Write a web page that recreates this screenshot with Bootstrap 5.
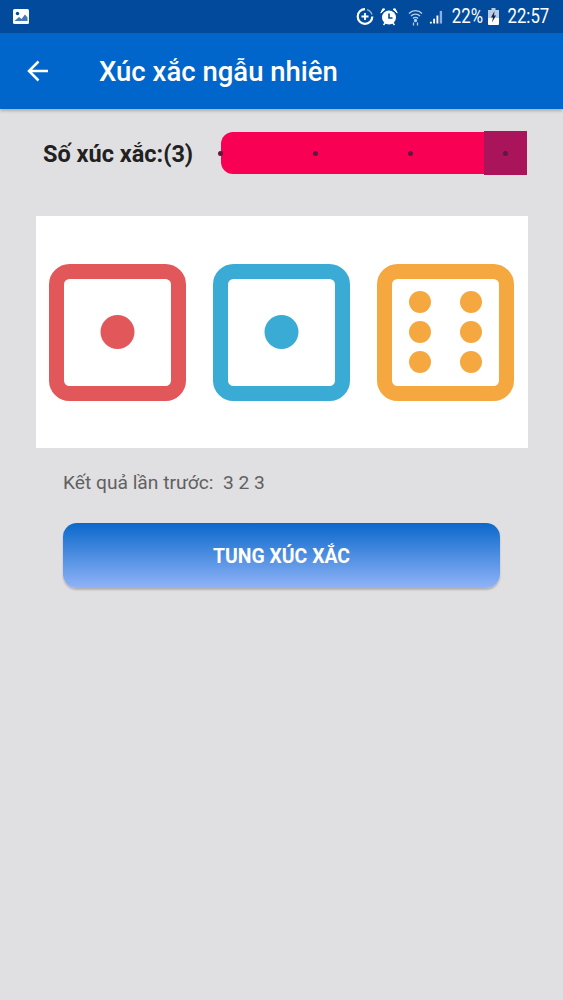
<!DOCTYPE html>
<html lang="vi">
<head>
<meta charset="utf-8">
<title>Xúc xắc ngẫu nhiên</title>
<link rel="stylesheet" href="https://cdn.jsdelivr.net/npm/bootstrap@5.3.0/dist/css/bootstrap.min.css">
<style>
html,body{height:100%;}
body{background:#e0dfe1;font-family:Roboto,"Liberation Sans",sans-serif;overflow:hidden;}
.phone-status{height:33px;background:#024b9c;color:#fff;padding:0 14px 0 13px;font-size:21px;}
.status-text{display:inline-block;line-height:33px;transform:scaleX(.8);transform-origin:right center;}
.status-gap-a{margin-left:6px;}
.status-gap-b{margin-left:10px;}
.status-gap-c{margin-left:6px;}
.status-gap-d{margin-left:1px;}
.status-gap-e{margin-left:5px;}
.status-gap-f{margin-left:-2px;}
.app-head{height:76px;background:#0066cc;color:#fff;box-shadow:0 2px 3px rgba(0,0,0,.22);padding-left:27px;}
.app-title{font-size:27.500px;font-weight:500;margin:2px 0 0 51px;line-height:1;}
.count-row{padding:23px 35px 0 43px;}
.count-label{font-size:23.500px;font-weight:700;color:#212121;width:178px;line-height:1;padding-top:3px;}
.slider-track{width:306px;height:42px;background:#f80054;border-radius:12px 0 0 12px;position:relative;}
.slider-thumb{position:absolute;right:0;top:-1px;width:43px;height:44px;background:#a9145a;}
.slider-dot{position:absolute;top:19px;width:5px;height:5px;border-radius:50%;background:#5c1a3e;}
.dice-panel{margin:42px 35px 0 36px;height:232px;background:#fff;}
.dice-panel svg{display:block;}
.last-result{margin:24px 0 0 63px;font-size:19.200px;color:#616161;line-height:22px;white-space:pre;}
.roll-btn{display:block;margin:29px 0 0 63px;width:437px;height:65px;padding-top:8px;border:0;border-radius:14px;background:linear-gradient(#0a68cb,#90b3f7);color:#fff;font-size:19.400px;font-weight:700;box-shadow:0 2px 2px rgba(0,0,0,.2);}
</style>
</head>
<body>
<div class="phone-status d-flex align-items-center">
  <svg width="16" height="15" viewBox="0 0 16 15"><rect width="16" height="15" rx="1.500" fill="#fff"/><circle cx="4.500" cy="4.500" r="1.700" fill="#024b9c"/><path d="M1.500 12 6 8l2.500 2L12 5.500l2.500 3V12z" fill="#024b9c" opacity=".75"/></svg>
  <div class="ms-auto d-flex align-items-center">
    <svg width="18" height="19" viewBox="0 0 18 19" fill="none"><path d="M9 2.200A7.300 7.300 0 1 0 16.300 9.500" stroke="#fff" stroke-width="2.200"/><path d="M11 2.600a7.300 7.300 0 0 1 5 5" stroke="#8fb0d6" stroke-width="1.400"/><path d="M9 6v7M5.500 9.500h7" stroke="#fff" stroke-width="1.800"/></svg>
    <svg class="status-gap-a" width="18" height="18" viewBox="0 0 18 18"><circle cx="9" cy="9.500" r="7" fill="#fff"/><path d="M9 5.500v4.500h3.500" fill="none" stroke="#024b9c" stroke-width="1.600"/><path d="M0.800 5 5 1.200 2.800.800zM17.200 5 13 1.200l2.200-.4z" fill="#fff" stroke="#fff"/><path d="M3.500 17l2-2.500M14.500 17l-2-2.500" stroke="#fff" stroke-width="1.500"/></svg>
    <svg class="status-gap-b" width="15" height="18" viewBox="0 0 15 18" fill="none" stroke="#b9cde4" stroke-width="1.300"><path d="M1 5.500a9 9 0 0 1 13 0M3 8a6.200 6.200 0 0 1 9 0M5 10.500a3.400 3.400 0 0 1 5 0"/><circle cx="7.500" cy="12.500" r="1" fill="#b9cde4"/><path d="M5.500 14.500v3M9.500 14.500v3"/></svg>
    <svg class="status-gap-c" width="14" height="16" viewBox="0 0 15 16"><path d="M1 13h2v2H1zM4.500 10h2v5h-2zM8 6.500h2V15H8z" fill="#fff"/><path d="M11.500 1.500h2.500V15h-2.500z" fill="#8fb0d6"/></svg>
    <span class="status-text status-gap-d">22%</span>
    <svg class="status-gap-e" width="11" height="17" viewBox="0 0 11 17"><rect x="3.500" width="4" height="2" fill="#b9cde4"/><rect y="2" width="11" height="15" rx="1" fill="#fff"/><rect y="2" width="11" height="8" fill="#b9cde4"/><path d="M6.500 3 3 9.500h2L4 14.500l4-7H6z" fill="#12284a"/></svg>
    <span class="status-text status-gap-f">22:57</span>
  </div>
</div>
<header class="app-head d-flex align-items-center">
  <svg width="21" height="22" viewBox="0 0 21 22" fill="none" stroke="#fff" stroke-width="2.500"><path d="M21 11H2M11.500 1.500 2 11l9.500 9.500"/></svg>
  <h1 class="app-title">Xúc xắc ngẫu nhiên</h1>
</header>
<main>
  <div class="count-row d-flex align-items-center">
    <div class="count-label">Số xúc xắc:(3)</div>
    <div class="slider-track">
      <div class="slider-thumb"></div>
      <span class="slider-dot" style="left:-3px"></span>
      <span class="slider-dot" style="left:92px"></span>
      <span class="slider-dot" style="left:187px"></span>
      <span class="slider-dot" style="left:282px"></span>
    </div>
  </div>
  <div class="dice-panel">
    <svg width="492" height="232" viewBox="0 0 492 232">
      <g fill="none" stroke-width="15">
        <rect x="20.500" y="55.500" width="122" height="122" rx="13" stroke="#e1575a"/>
        <rect x="184.500" y="55.500" width="122" height="122" rx="13" stroke="#3aabd4"/>
        <rect x="348.500" y="55.500" width="122" height="122" rx="13" stroke="#f5a83f"/>
      </g>
      <circle cx="81.500" cy="116" r="17" fill="#e1575a"/>
      <circle cx="245.500" cy="116" r="17" fill="#3aabd4"/>
      <g fill="#f5a83f">
        <circle cx="384" cy="86" r="11"/><circle cx="435" cy="86" r="11"/>
        <circle cx="384" cy="116" r="11"/><circle cx="435" cy="116" r="11"/>
        <circle cx="384" cy="146" r="11"/><circle cx="435" cy="146" r="11"/>
      </g>
    </svg>
  </div>
  <div class="last-result">Kết quả lần trước:  3 2 3</div>
  <button type="button" class="btn roll-btn">TUNG XÚC XẮC</button>
</main>
<script src="https://cdn.jsdelivr.net/npm/bootstrap@5.3.0/dist/js/bootstrap.bundle.min.js"></script>
</body>
</html>
